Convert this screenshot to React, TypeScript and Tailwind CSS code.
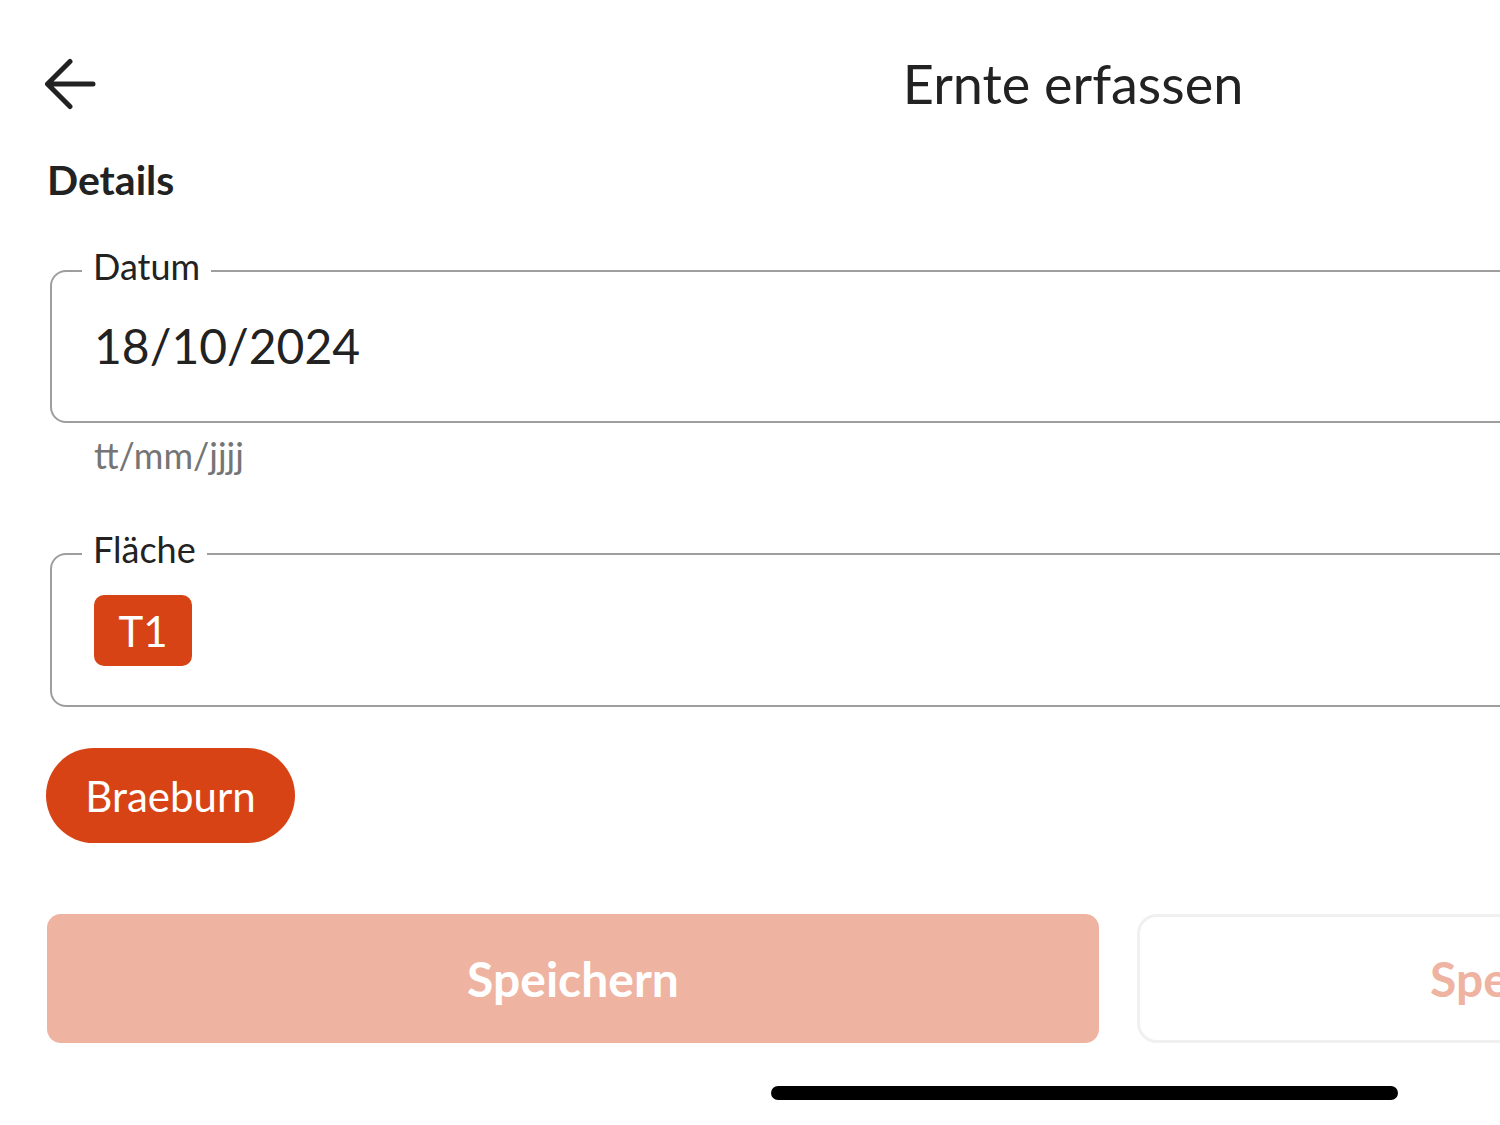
import React from "react";

const font = { fontFamily: "Lato, 'Noto Sans', sans-serif" };

export default function App() {
  return (
    <div className="w-[1500px] h-[1125px] overflow-hidden bg-white" style={font}>
      <div className="w-[2146px] flex flex-col px-[47px] text-[#222222]">
        {/* Header */}
        <div className="mt-[52px] grid grid-cols-[1fr_auto_1fr] items-center h-[64px]">
          <div className="flex items-center -ml-[3px]">
            <svg width="52" height="52" viewBox="0 0 52 52" fill="none">
              <path d="M49 26H4M26 3.5L3.5 26L26 48.5" stroke="#222222" strokeWidth="5" strokeLinecap="round" strokeLinejoin="round" />
            </svg>
          </div>
          <div className="text-[54px] leading-[64px] font-normal">Ernte erfassen</div>
          <div />
        </div>

        {/* Details */}
        <div className="mt-[40px] text-[41px] leading-[48px] font-bold">Details</div>

        {/* Datum */}
        <fieldset className="mt-[44px] ml-[3px] mr-[3px] border-2 border-[#9e9e9e] rounded-[16px] px-0">
          <legend className="ml-[30px] px-[11px] text-[36px] leading-[36px] pb-[9px]">Datum</legend>
          <div className="pl-[42px] pt-[29px] pb-[51px] text-[48px] leading-[48px]">18/10/2024</div>
        </fieldset>
        <div className="mt-[14px] pl-[47px] text-[36px] leading-[36px] text-[#757575]">tt/mm/jjjj</div>

        {/* Fläche */}
        <fieldset className="mt-[58px] ml-[3px] mr-[3px] border-2 border-[#9e9e9e] rounded-[16px] px-0">
          <legend className="ml-[30px] px-[11px] text-[36px] leading-[36px] pb-[9px]">Fläche</legend>
          <div className="pl-[42px] pt-[19px] pb-[39px] flex">
            <div className="w-[98px] h-[71px] rounded-[10px] bg-[#d84315] text-white text-[42px] leading-none flex items-center justify-center">
              T1
            </div>
          </div>
        </fieldset>

        {/* Braeburn */}
        <div className="mt-[41px] flex">
          <div className="h-[95px] w-[249px] -ml-[1px] rounded-full bg-[#d84315] text-white text-[42px] leading-none flex items-center justify-center">
            Braeburn
          </div>
        </div>

        {/* Buttons */}
        <div className="mt-[71px] flex gap-[38px]">
          <div className="w-[1052px] h-[129px] shrink-0 rounded-[14px] bg-[#efb3a1] text-white font-bold text-[48px] leading-none flex items-center justify-center">
            Speichern
          </div>
          <div className="w-[798px] h-[129px] shrink-0 rounded-[20px] border-[3px] border-[#f0f0f0] bg-white text-[#efb3a1] font-bold text-[48px] leading-none flex items-center justify-center">
            Speichern
          </div>
        </div>

        {/* Home indicator */}
        <div className="mt-[43px] flex">
          <div className="ml-[724px] w-[627px] h-[14px] rounded-full bg-black" />
        </div>
      </div>
    </div>
  );
}
